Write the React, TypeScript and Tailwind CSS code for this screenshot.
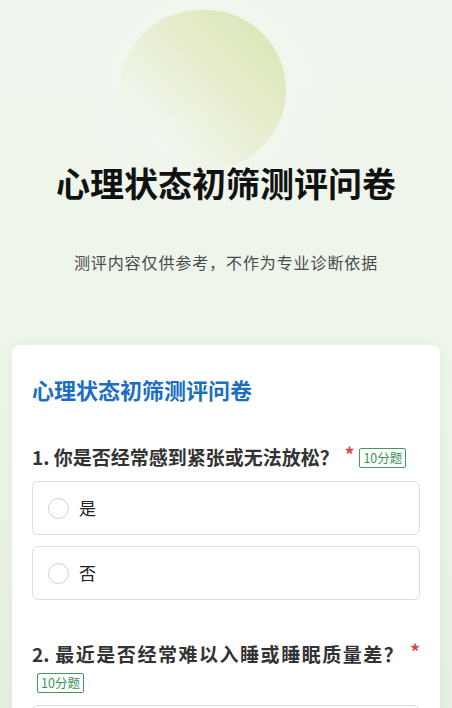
import React from "react";

const font = { fontFamily: '"Noto Sans CJK SC", "Noto Sans", sans-serif' };

function Badge() {
  return (
    <span className="inline-flex items-center justify-center align-middle h-[20px] px-[3px] ml-[5px] border border-[#3f9a5c] rounded-[2px] text-[12.5px] leading-none text-[#3a9558] font-normal relative top-[-2px]">
      10分题
    </span>
  );
}

function Option({ label }: { label: string }) {
  return (
    <div className="flex items-center h-[54px] border border-[#dedede] rounded-[6px] pl-[15px] bg-white">
      <span className="w-[21px] h-[21px] rounded-full border border-[#cfcfcf]" />
      <span className="ml-[10px] text-[17px] text-[#222]">{label}</span>
    </div>
  );
}

function Question({ n, text, children }: { n: number; text: string; children?: React.ReactNode }) {
  return (
    <div>
      <p className="text-[19px] leading-[28px] font-bold text-[#333] text-justify">
        {n}. {text}
        <span className="text-[#e04545] ml-[6px] relative top-[-3px]">*</span>
        <Badge />
      </p>
      {children}
    </div>
  );
}

export default function App() {
  return (
    <div
      className="relative h-[708px] w-full overflow-hidden bg-gradient-to-b from-[#eff5ec] via-[#eef5ea] to-[#e7f0e2]"
      style={font}
    >
      <div className="absolute left-[90px] top-[-20px] w-[240px] h-[240px] rounded-full bg-[radial-gradient(circle,rgba(255,255,255,0.25),rgba(255,255,255,0))]" />
      <div className="absolute left-[120px] top-[10px] w-[166px] h-[160px] rounded-full bg-[linear-gradient(225deg,#d6e4b0_0%,#e4ecc8_35%,rgba(240,245,234,0.15)_78%)]" />
      <div className="relative flex flex-col items-center pt-[161px]">
        <h1 className="text-[34px] leading-[44px] font-bold text-[#111]">心理状态初筛测评问卷</h1>
        <p className="mt-[45px] text-[16px] leading-[24px] tracking-[0.9px] text-[#4a4a4a]">测评内容仅供参考，不作为专业诊断依据</p>
      </div>
      <div className="relative mx-[12px] mt-[71px] bg-white rounded-[8px] shadow-[0_0_14px_rgba(120,150,110,0.08)] px-[20px] pt-[29px] pb-[20px]">
        <h2 className="text-[22px] leading-[30px] font-bold text-[#1b6ec2]">心理状态初筛测评问卷</h2>
        <div className="mt-[39px]">
          <Question n={1} text="你是否经常感到紧张或无法放松？">
            <div className="mt-[10px] flex flex-col gap-[11px]">
              <Option label="是" />
              <Option label="否" />
            </div>
          </Question>
        </div>
        <div className="mt-[40px]">
          <Question n={2} text="最近是否经常难以入睡或睡眠质量差？">
            <div className="mt-[9px] flex flex-col gap-[11px]">
              <Option label="是" />
              <Option label="否" />
            </div>
          </Question>
        </div>
      </div>
    </div>
  );
}
